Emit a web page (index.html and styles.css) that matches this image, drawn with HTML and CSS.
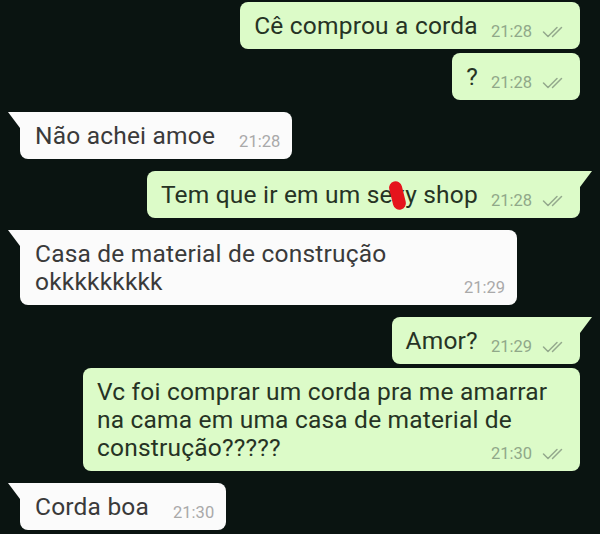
FILE: index.html
```html
<!DOCTYPE html>
<html lang="pt-BR">
<head>
<meta charset="utf-8">
<title>Conversa</title>
<link rel="stylesheet" href="styles.css">
</head>
<body>
<div class="chat">
  <div class="bubble out">Cê comprou a corda<span class="meta"><span class="time">21:28</span><svg class="ticks" viewBox="0 0 24 12"><path d="M1.5 6 L6 10.5 L15 1.5 M10.5 10.5 L19.5 1.5"/></svg></span></div>
  <div class="bubble out cont">?<span class="meta"><span class="time">21:28</span><svg class="ticks" viewBox="0 0 24 12"><path d="M1.5 6 L6 10.5 L15 1.5 M10.5 10.5 L19.5 1.5"/></svg></span></div>
  <div class="bubble in tail group">Não achei amoe<span class="meta"><span class="time">21:28</span></span></div>
  <div class="bubble out tail group">Tem que ir em um se<span class="censor">x</span>y shop<span class="meta"><span class="time">21:28</span><svg class="ticks" viewBox="0 0 24 12"><path d="M1.5 6 L6 10.5 L15 1.5 M10.5 10.5 L19.5 1.5"/></svg></span></div>
  <div class="bubble in tail group">Casa de material de construção okkkkkkkkk<span class="meta"><span class="time">21:29</span></span></div>
  <div class="bubble out tail group">Amor?<span class="meta"><span class="time">21:29</span><svg class="ticks" viewBox="0 0 24 12"><path d="M1.5 6 L6 10.5 L15 1.5 M10.5 10.5 L19.5 1.5"/></svg></span></div>
  <div class="bubble out cont">Vc foi comprar um corda pra me amarrar na cama em uma casa de material de construção?????<span class="meta"><span class="time">21:30</span><svg class="ticks" viewBox="0 0 24 12"><path d="M1.5 6 L6 10.5 L15 1.5 M10.5 10.5 L19.5 1.5"/></svg></span></div>
  <div class="bubble in tail group">Corda boa<span class="meta"><span class="time">21:30</span></span></div>
</div>
</body>
</html>
```

FILE: styles.css
```css
html, body {
  margin: 0;
  padding: 0;
}
body {
  background: #0a1411;
  font-family: Roboto, "Noto Sans", sans-serif;
  height: 534px;
  overflow: hidden;
}
.chat {
  display: flex;
  flex-direction: column;
  padding: 2px 20px 0 20px;
}
.bubble {
  position: relative;
  box-sizing: border-box;
  max-width: 497px;
  padding: 10px 14px 9px 14px;
  border-radius: 8px;
  font-size: 24.5px;
  line-height: 28px;
  letter-spacing: 0.2px;
}
.out {
  align-self: flex-end;
  background: #dcfbc8;
  color: #263324;
}
.in {
  align-self: flex-start;
  background: #fbfbfb;
  color: #3a3a3a;
  padding-left: 15px;
  padding-right: 12px;
}
.cont {
  margin-top: 4px;
}
.group {
  margin-top: 12px;
}
.tail.in {
  border-top-left-radius: 0;
}
.tail.out {
  border-top-right-radius: 0;
}
.tail::before {
  content: "";
  position: absolute;
  top: 0;
  width: 12px;
  height: 16px;
  background: inherit;
}
.tail.in::before {
  left: -12px;
  clip-path: polygon(0 0, 100% 0, 100% 100%);
}
.tail.out::before {
  right: -12px;
  clip-path: polygon(0 0, 100% 0, 0 100%);
}
.meta {
  float: right;
  display: flex;
  align-items: center;
  gap: 10px;
  margin: 6px 0 -6px 13px;
  font-size: 16.5px;
  line-height: 28px;
  letter-spacing: 0;
}
.out .meta {
  color: #90a889;
}
.in .meta {
  color: #a9a9a9;
  margin-left: 24px;
}
.ticks {
  width: 24px;
  height: 12px;
  fill: none;
  stroke: #94a98d;
  stroke-width: 1.5;
  stroke-linecap: round;
  stroke-linejoin: round;
}
.censor {
  position: relative;
}
.censor::after {
  content: "";
  position: absolute;
  left: -2px;
  top: 1px;
  width: 13px;
  height: 29px;
  border-radius: 7px;
  background: #e5141c;
  transform: rotate(-14deg);
}
```
